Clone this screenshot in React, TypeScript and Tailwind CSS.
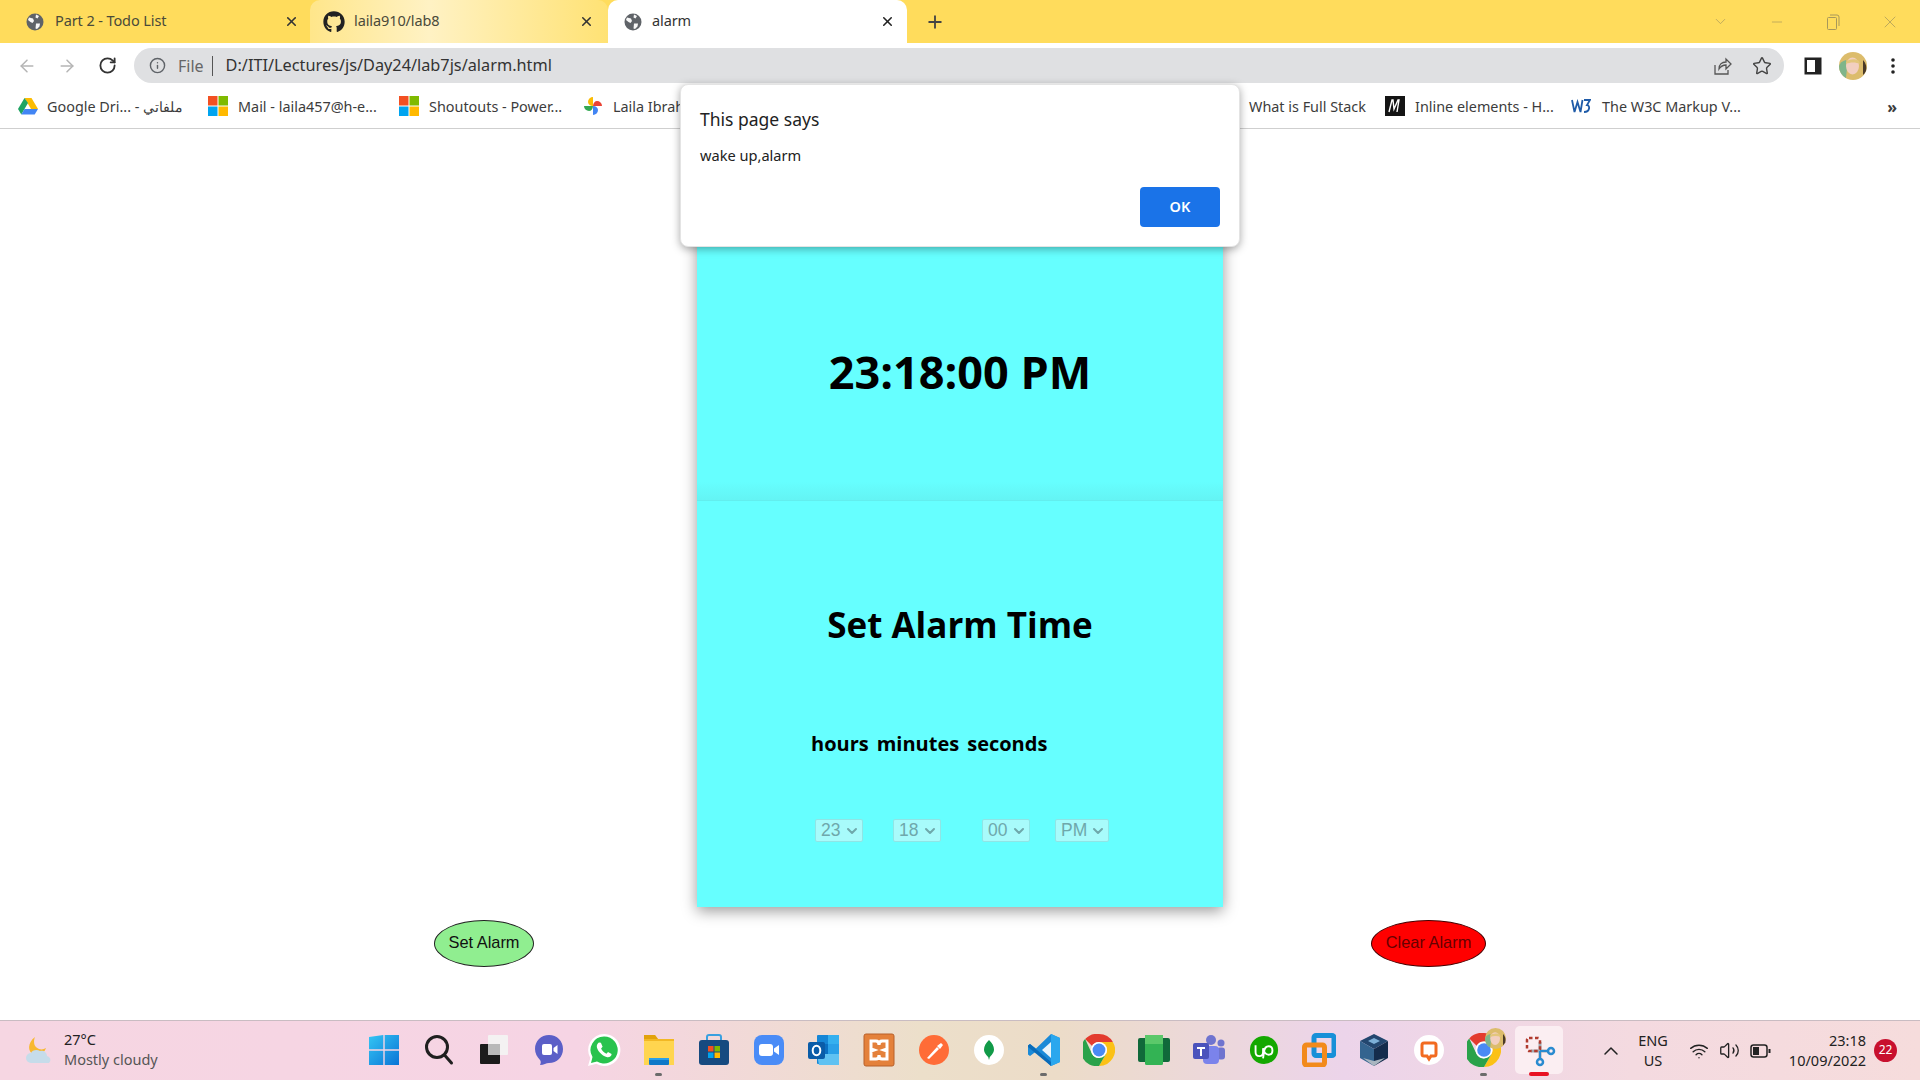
import React from "react";
import { FaGithub } from "react-icons/fa";
import { ArrowLeft, ArrowRight, RotateCw, Info, Star, Plus, X, ChevronDown, Minus, ChevronUp, Wifi, Volume2 } from "lucide-react";

const Globe = () => (
  <svg width="18" height="18" viewBox="0 0 18 18">
    <circle cx="9" cy="9" r="8.5" fill="#5f6368" />
    <path d="M3 4.500 7 5.500 8 8 6.500 10 4.500 9 2 7ZM10 1.500 13 3 11.500 5.500 9.500 4.500ZM10 10.500 14 10.500 13.500 13.500 11 16 9.500 15.500Z" fill="#fff" opacity="0.95" />
  </svg>
);

const Ms = () => (
  <svg width="20" height="20" viewBox="0 0 20 20">
    <rect width="9.500" height="9.500" fill="#f25022" />
    <rect x="10.500" width="9.500" height="9.500" fill="#7fba00" />
    <rect y="10.500" width="9.500" height="9.500" fill="#00a4ef" />
    <rect x="10.500" y="10.500" width="9.500" height="9.500" fill="#ffb900" />
  </svg>
);

const ChromeLogo = ({ size = 30 }: { size?: number }) => (
  <svg width={size} height={size} viewBox="0 0 30 30">
    <path d="M15 0A15 15 0 0 1 28 7.500L15 7.500A7.500 7.500 0 0 0 8.500 11.300L2 4.800A15 15 0 0 1 15 0Z" fill="#e33b2e" />
    <path d="M28 7.500A15 15 0 0 1 15 30L21.500 18.800A7.500 7.500 0 0 0 21.500 11.200L15 7.500Z" fill="#fbc116" />
    <path d="M15 30A15 15 0 0 1 2 4.800L8.500 18.800A7.500 7.500 0 0 0 15 22.500L21.500 18.800Z" fill="#2aa24a" />
    <circle cx="15" cy="15" r="7.500" fill="#fff" />
    <circle cx="15" cy="15" r="6" fill="#4a8af4" />
  </svg>
);

const Face = ({ w, h }: { w: number; h: number }) => (
  <svg width={w} height={h} viewBox="0 0 28 28">
    <circle cx="14" cy="14" r="14" fill="#dcbc6c" />
    <path d="M0 14a14 14 0 0 0 7 12l1-10-1-8C3 9 1 11 0 14Z" fill="#7fb58a" />
    <path d="M24 8c3 3 4 7 3 11-1 2-2 3-3 4Z" fill="#4a3a28" />
    <ellipse cx="13.500" cy="14" rx="6.500" ry="8.500" fill="#f2cfc0" />
    <path d="M7 10c2-3 10-4 13-1l1 3c-4-2-10-2-14 0Z" fill="#e3c67c" />
  </svg>
);

const icons: React.ReactNode[] = [
  <svg key="win" width="32" height="32" viewBox="0 0 32 32"><defs><linearGradient id="w" x1="0" y1="0" x2="1" y2="1"><stop offset="0" stopColor="#35c5f4" /><stop offset="1" stopColor="#0a74d6" /></linearGradient></defs><path d="M1 3 15.300 1v14.300H1ZM16.700 1 31 1v14.300H16.700ZM1 16.700h14.300V31H1ZM16.700 16.700H31V31H16.700Z" fill="url(#w)" /></svg>,
  <svg key="search" width="32" height="32" viewBox="0 0 32 32" fill="none" stroke="#1f1f1f" strokeWidth="3" strokeLinecap="round"><circle cx="14" cy="13" r="10.500" /><path d="m21.500 21 7 8" /></svg>,
  <svg key="tv" width="32" height="32" viewBox="0 0 32 32"><rect x="10" y="1" width="20" height="20" rx="1" fill="#f4f2f2" /><rect x="2" y="10" width="20" height="20" rx="1" fill="#1b1b1b" /><rect x="10" y="10" width="12" height="11" fill="#b9b9b9" /></svg>,
  <svg key="tc" width="32" height="34" viewBox="0 0 32 34"><path d="M16 2c8 0 14 6 14 14s-6 14-14 14c-3 0-5 2-9 2 1-2 1-4 0-5C4 24 2 20 2 16 2 8 8 2 16 2Z" fill="#5b5fc7" /><rect x="9" y="11" width="10" height="11" rx="2" fill="#fff" /><path d="m20.500 15 4-3v9l-4-3Z" fill="#fff" /></svg>,
  <svg key="wa" width="34" height="34" viewBox="0 0 34 34"><path d="M17 1a16 16 0 0 0-13.700 24L1 33l8.300-2.200A16 16 0 1 0 17 1Z" fill="#fff" /><path d="M17 3.500a13.500 13.500 0 0 0-11.500 20.500L4 30l6-1.600A13.500 13.500 0 1 0 17 3.500Z" fill="#29c34e" /><path d="M12 9.500c-1 .4-2.200 2-2.200 4 0 3 4.500 9.500 10.500 10.800 2.500.3 4.300-1.500 4.300-3.300l-3.600-2-1.500 1.700c-2.500-1-4.600-3.200-5.400-5.300l1.500-1.600-1.700-4Z" fill="#fff" /></svg>,
  <svg key="files" width="32" height="32" viewBox="0 0 32 32"><path d="M1 1h11l3 4h16v26H1Z" fill="#ffd54f" /><path d="M1 1h11l3 4H1Z" fill="#e2a20c" /><rect x="1" y="5" width="30" height="2" fill="#f2b824" /><rect x="6" y="24" width="20" height="7" rx="1" fill="#0f78c8" /><rect x="6" y="24" width="20" height="2" fill="#2aa0e8" /></svg>,
  <svg key="store" width="32" height="32" viewBox="0 0 32 32"><path d="M9 7V3a2 2 0 0 1 2-2h10a2 2 0 0 1 2 2v4" fill="none" stroke="#39a0e0" strokeWidth="2" /><rect x="1" y="6" width="30" height="25" rx="3" fill="#164a80" /><rect x="10" y="12" width="5.500" height="5.500" fill="#f25022" /><rect x="16.500" y="12" width="5.500" height="5.500" fill="#7fba00" /><rect x="10" y="18.500" width="5.500" height="5.500" fill="#00a4ef" /><rect x="16.500" y="18.500" width="5.500" height="5.500" fill="#ffb900" /></svg>,
  <svg key="zoom" width="32" height="32" viewBox="0 0 32 32"><rect x="1" y="1" width="30" height="30" rx="8" fill="#4a8cf7" /><rect x="6" y="10" width="14" height="12" rx="3" fill="#fff" /><path d="m21 14.500 5-3.500v10l-5-3.500Z" fill="#fff" /></svg>,
  <svg key="out" width="34" height="34" viewBox="0 0 34 34"><rect x="10" y="2" width="22" height="29" rx="1" fill="#1586d6" /><rect x="21" y="2" width="11" height="9" fill="#35b0ef" /><rect x="10" y="11" width="11" height="10" fill="#0a6fc2" /><rect x="21" y="11" width="11" height="10" fill="#2aa0e8" /><path d="M10 21h22v11H12Z" fill="#60c2f2" /><rect x="1" y="9" width="17" height="17" rx="2" fill="#0a5ca8" /><ellipse cx="9.500" cy="17.500" rx="3.800" ry="4.800" fill="none" stroke="#fff" strokeWidth="2" /></svg>,
  <svg key="xa" width="32" height="34" viewBox="0 0 32 34"><rect x="1" y="1" width="30" height="32" rx="2" fill="#e4813b" stroke="#b8602a" /><path d="M8 8h5c2 0 3 2 3 4 0-2 1-4 3-4h5v8l-3 1 3 1v8h-5c-2 0-3-2-3-4 0 2-1 4-3 4H8v-8l3-1-3-1Z" fill="none" stroke="#fff" strokeWidth="3" /></svg>,
  <svg key="pm" width="32" height="32" viewBox="0 0 32 32"><circle cx="16" cy="16" r="15" fill="#ff6c37" /><path d="M9 24 19 13l2 2-10 10ZM19 12l4-3 2 2-3 4Z" fill="#fff" /></svg>,
  <svg key="mg" width="32" height="32" viewBox="0 0 32 32"><circle cx="16" cy="16" r="15" fill="#fff" /><path d="M16 6c3 3 5 6 5 9.500 0 3.500-3 6-4.200 7.500L16 26l-.8-3C14 21.500 11 19 11 15.500 11 12 13 9 16 6Z" fill="#119a48" /></svg>,
  <svg key="vs" width="34" height="34" viewBox="0 0 34 34"><path d="M24 1 33 5v24l-9 4L9 18.500 3 23 1 21.500V12.500L3 11l6 4.500Z" fill="#1a8ad8" /><path d="M24 1 33 5v24l-9 4Z" fill="#2aa7ee" /><path d="M24 9v16l-9-8Z" fill="#fff" opacity="0.9" /><path d="M1 12.500 3 11l21 18v4L1 14Z" fill="#0a6bb8" /></svg>,
  <ChromeLogo key="cr" size={32} />,
  <svg key="gr" width="34" height="34" viewBox="0 0 34 34"><rect x="1" y="5" width="32" height="24" rx="2" fill="#10693a" /><rect x="8" y="2" width="18" height="30" rx="1.500" fill="#33b354" /><rect x="8" y="2" width="18" height="9" fill="#5bc86a" /></svg>,
  <svg key="te" width="34" height="34" viewBox="0 0 34 34"><circle cx="19" cy="7" r="5" fill="#6f74cf" /><circle cx="29" cy="10" r="3.500" fill="#6f74cf" /><rect x="25" y="14.500" width="8" height="12" rx="3" fill="#6f74cf" /><rect x="11" y="13" width="16" height="18" rx="4" fill="#7b83eb" /><rect x="1" y="10" width="16" height="16" rx="2" fill="#4b53bc" /><path d="M5 14h8v2h-3v7H8v-7H5Z" fill="#fff" /></svg>,
  <svg key="up" width="30" height="30" viewBox="0 0 32 32"><circle cx="16" cy="16" r="15" fill="#14a800" /><path d="M7 11v7c0 3 2 4.500 4 4.500s4-1.500 4-4.500v-4c1 4 3 7 6 7 3 0 4-2 4-4.500S23.500 12 21 12s-4.500 2-5 6l-1 7" fill="none" stroke="#fff" strokeWidth="2" /></svg>,
  <svg key="vm" width="34" height="34" viewBox="0 0 34 34" fill="none"><rect x="12" y="2.500" width="20" height="20" rx="2" stroke="#1790d8" strokeWidth="5" /><rect x="2.500" y="12" width="20" height="20" rx="2" stroke="#f28a1b" strokeWidth="5" /></svg>,
  <svg key="vb" width="32" height="34" viewBox="0 0 32 34"><path d="M16 1 30 8 16 16 2 8Z" fill="#23476f" /><path d="M2 8 16 16v17L2 25Z" fill="#34648f" /><path d="M30 8 16 16v17l14-8Z" fill="#142c4c" /><path d="M16 5l6 3-6 3-6-3Z" fill="#7db0d8" /><path d="M5 25l11 8 11-8-11 3Z" fill="#a9b6c0" /></svg>,
  <svg key="ch" width="32" height="32" viewBox="0 0 32 32"><circle cx="16" cy="16" r="15" fill="#fff" /><path d="M11 9h10a2 2 0 0 1 2 2v9a2 2 0 0 1-2 2h-3l-2 3-2-3h-3a2 2 0 0 1-2-2v-9a2 2 0 0 1 2-2Z" fill="none" stroke="#f26b21" strokeWidth="3" /></svg>,
  <div key="cr2" className="relative w-[34px] h-[34px]"><ChromeLogo size={34} /><div className="absolute right-[-5px] top-[-6px]"><Face w={21} h={23} /></div></div>,
  <svg key="sn" width="36" height="36" viewBox="0 0 36 36" fill="none"><path d="M19 10v17M10 19h17" stroke="#a3a8b0" strokeWidth="3" /><rect x="6" y="6" width="13" height="13" rx="2" stroke="#b03a2e" strokeWidth="2.500" strokeDasharray="3.500 2.500" /><path d="M19 19 27.500 19" stroke="#2a8bd0" strokeWidth="2" /><path d="M19 19 19 27.500" stroke="#2a8bd0" strokeWidth="2" /><circle cx="30" cy="19" r="3" stroke="#2a8bd0" strokeWidth="2.500" /><circle cx="19" cy="30" r="3" stroke="#2a8bd0" strokeWidth="2.500" /></svg>,
];

const marks: Record<number, boolean> = { 5: true, 12: true, 20: true };

export default function App() {
  return (
    <div className="relative w-[1920px] h-[1080px] overflow-hidden bg-white flex flex-col font-['Noto_Sans','Open_Sans',sans-serif] text-[#222]">
      {/* Tab strip */}
      <div className="h-[43px] shrink-0 bg-[#ffdc5c] flex items-stretch text-[14.5px] text-[#4a4a3a]">
        <div className="w-[310px] shrink-0 flex items-center pl-[26px]">
          <Globe />
          <span className="ml-[11px] pb-[1px] w-[229px] truncate tracking-[-0.1px]">Part 2 - Todo List</span>
          <X size={15} strokeWidth={2.5} className="text-[#333]" />
        </div>
        <div className="w-[298px] shrink-0 flex items-center pl-[13px] rounded-t-[10px] bg-[linear-gradient(90deg,#ffe68a_0%,#fff2c4_40%,#ffe274_100%)]">
          <FaGithub size={22} className="text-[#222]" />
          <span className="ml-[9px] pb-[1px] w-[225px] truncate tracking-[-0.1px]">laila910/lab8</span>
          <X size={15} strokeWidth={2.5} className="text-[#333]" />
        </div>
        <div className="w-[299px] shrink-0 flex items-center pl-[16px] rounded-t-[10px] bg-white text-[#333]">
          <Globe />
          <span className="ml-[10px] pb-[1px] w-[228px] truncate tracking-[-0.1px]">alarm</span>
          <X size={15} strokeWidth={2.5} className="text-[#222]" />
        </div>
        <div className="flex items-center ml-[18px]"><Plus size={20} strokeWidth={2.2} className="text-[#444]" /></div>
        <div className="ml-auto flex items-center pr-[20px] text-[#a8985a]">
          <ChevronDown size={17} strokeWidth={1} />
          <Minus size={16} strokeWidth={1} className="ml-[40px]" />
          <svg width="14" height="16" viewBox="0 0 14 16" fill="none" stroke="currentColor" className="ml-[41px]"><rect x="1.500" y="3.500" width="9" height="12" rx="1" /><path d="M4 1h7a2 2 0 0 1 2 2v9" /></svg>
          <X size={20} strokeWidth={0.9} className="ml-[40px]" />
        </div>
      </div>
      {/* Toolbar */}
      <div className="h-[45px] shrink-0 bg-white flex items-center">
        <ArrowLeft size={20} strokeWidth={1.8} className="ml-[17px] text-[#b5b5b5]" />
        <ArrowRight size={20} strokeWidth={1.8} className="ml-[20px] text-[#b5b5b5]" />
        <RotateCw size={19} strokeWidth={2.3} className="ml-[21px] text-[#333]" />
        <div className="ml-[17px] w-[1650px] h-[35px] rounded-full bg-[#dfe0e2] flex items-center text-[16px]">
          <Info size={17} strokeWidth={2} className="ml-[15px] text-[#5f6368]" />
          <span className="ml-[12px] text-[#666]">File</span>
          <span className="ml-[8px] w-px h-[20px] bg-[#555]" />
          <span className="ml-[13px] text-[#333] text-[16.3px]">D:/ITI/Lectures/js/Day24/lab7js/alarm.html</span>
          <svg width="20" height="20" viewBox="0 0 20 20" fill="none" stroke="#555" strokeWidth="1.300" className="ml-auto"><path d="M3 9v9h13v-4M7 13c0-5 3-7 7-7V3l5 5-5 5V9c-3 0-5 1-7 4Z" /></svg>
          <Star size={20} strokeWidth={1.7} className="ml-[20px] mr-[12px] text-[#444]" />
        </div>
        <svg width="18" height="18" viewBox="0 0 18 18" className="ml-[20px]"><rect x="0.500" y="0.500" width="17" height="17" fill="#222" /><rect x="3" y="3" width="8" height="12" fill="#fff" /></svg>
        <div className="ml-[17px]"><Face w={28} h={28} /></div>
        <svg width="4" height="16" viewBox="0 0 4 16" className="ml-[24px]"><circle cx="2" cy="2" r="1.800" fill="#222" /><circle cx="2" cy="8" r="1.800" fill="#222" /><circle cx="2" cy="14" r="1.800" fill="#222" /></svg>
      </div>
      {/* Bookmarks */}
      <div className="h-[41px] shrink-0 bg-white border-b border-[#cfcfcf] pb-[3px] flex items-center text-[14.4px] text-[#3c3c3c]">
        <div className="ml-[18px] w-[190px] flex items-center gap-[9px]">
          <svg width="20" height="18" viewBox="0 0 20 18"><path d="M6.500 1h7L20 12h-7Z" fill="#fbbc04" /><path d="M6.500 1 0 12l3.300 5.500L10 6Z" fill="#1fa463" /><path d="M3.300 17.500h13.400L20 12H6.500Z" fill="#4285f4" /></svg>
          <span className="truncate">Google Dri... - ملفاتي</span>
        </div>
        <div className="w-[191px] flex items-center gap-[10px]"><Ms /><span>Mail - laila457@h-e...</span></div>
        <div className="w-[184px] flex items-center gap-[10px]"><Ms /><span>Shoutouts - Power...</span></div>
        <div className="w-[646px] flex items-center gap-[10px]">
          <svg width="20" height="20" viewBox="0 0 20 20"><path d="M10 10V1a5 5 0 0 0-5 5c0 2 2 4 5 4Z" fill="#fbbc04" /><path d="M10 10h9a5 5 0 0 0-5-5c-2 0-4 2-4 5Z" fill="#ea4335" /><path d="M10 10v9a5 5 0 0 0 5-5c0-2-2-4-5-4Z" fill="#4285f4" /><path d="M10 10H1a5 5 0 0 0 5 5c2 0 4-2 4-5Z" fill="#34a853" /></svg>
          <span>Laila Ibrahim</span>
        </div>
        <div className="w-[156px] pl-[20px]">What is Full Stack</div>
        <div className="w-[186px] flex items-center gap-[10px]">
          <svg width="20" height="20" viewBox="0 0 20 20"><rect width="20" height="20" fill="#141414" /><path d="M4 16 7 4h1l1 9 4-9h1l-2 12" fill="none" stroke="#fff" strokeWidth="1.400" /></svg>
          <span>Inline elements - H...</span>
        </div>
        <div className="flex items-center gap-[11px]">
          <svg width="20" height="14" viewBox="0 0 20 14" fill="none" stroke="#1f5ba8" strokeWidth="1.800"><path d="M1 1l2.500 12L6.500 3l3 10 2-12M13 1h6l-3 5c3 0 3.500 7-3 7" /></svg>
          <span>The W3C Markup V...</span>
        </div>
        <span className="ml-auto mr-[23px] text-[16px] font-bold">»</span>
      </div>
      {/* Page */}
      <div className="flex-1 min-h-0 flex flex-col items-center">
        <div className="mt-[60px] w-[526px] bg-[#66ffff] shadow-[0_4px_14px_rgba(0,0,0,0.4)] text-black font-bold font-['Open_Sans','Noto_Sans',sans-serif]">
          <div className="h-[312px] pt-[54px] flex items-center justify-center border-b border-[#62eeee] bg-[linear-gradient(180deg,#66ffff_0%,#66ffff_94%,#64f4f4_100%)]">
            <h1 className="text-[45px] leading-none">23:18:00 PM</h1>
          </div>
          <div className="h-[406px] pt-[99px]">
            <h2 className="text-[35px] leading-[50px] text-center">Set Alarm Time</h2>
            <div className="mt-[80px] pl-[114px] text-[20px] leading-[28px] flex gap-[8px]"><span>hours</span><span>minutes</span><span>seconds</span></div>
            <div className="mt-[61px] pl-[118px] flex font-normal font-['Liberation_Sans',sans-serif] text-[17.5px] leading-none text-[#6fa8ab]">
              <div className="w-[48px] h-[23px] rounded-[2px] bg-[#a8fbfb] border border-[#8fe5e5] flex items-center justify-between pl-[5px] pr-[2px]">23<ChevronDown size={16} strokeWidth={3} /></div>
              <div className="ml-[30px] w-[48px] h-[23px] rounded-[2px] bg-[#a8fbfb] border border-[#8fe5e5] flex items-center justify-between pl-[5px] pr-[2px]">18<ChevronDown size={16} strokeWidth={3} /></div>
              <div className="ml-[41px] w-[48px] h-[23px] rounded-[2px] bg-[#a8fbfb] border border-[#8fe5e5] flex items-center justify-between pl-[5px] pr-[2px]">00<ChevronDown size={16} strokeWidth={3} /></div>
              <div className="ml-[25px] w-[54px] h-[23px] rounded-[2px] bg-[#a8fbfb] border border-[#8fe5e5] flex items-center justify-between pl-[5px] pr-[2px]">PM<ChevronDown size={16} strokeWidth={3} /></div>
            </div>
          </div>
        </div>
        <div className="mt-[13px] w-full pl-[434px] pr-[434px] flex justify-between font-['Liberation_Sans',sans-serif] text-[16.4px]">
          <button className="w-[100px] h-[47px] pb-[2px] rounded-[50%] bg-[#90ee90] border border-[#222] text-[#111]">Set Alarm</button>
          <button className="w-[115px] h-[47px] pb-[2px] rounded-[50%] bg-[#ff0000] border border-[#400] text-[#600]">Clear Alarm</button>
        </div>
      </div>
      {/* Taskbar */}
      <div className="h-[60px] shrink-0 border-t border-[#c9bcc2] bg-[linear-gradient(90deg,#f6d6e2_0%,#f6d4e4_30%,#ecdfca_48%,#ecdcc8_55%,#ecd4ea_70%,#f4dae0_85%,#f6dcdc_100%)] flex items-center">
        <div className="w-[356px] shrink-0 flex items-center pl-[24px]">
          <svg width="30" height="30" viewBox="0 0 30 30"><path d="M11 1c-2 5-1 10 4 12 3 1 5 0 7-1-2 6-8 8-13 6C4 16 3 7 11 1Z" fill="#f8b830" /><path d="M7 27a5 5 0 0 1 0-10c1-3 6-4 9-2 3-1 7 1 7 5a4 4 0 0 1 2 7Z" fill="#c6dcea" /></svg>
          <div className="ml-[10px] pb-[4px] text-[14.5px] leading-[20px]"><div className="text-[#222]">27°C</div><div className="text-[#555]">Mostly cloudy</div></div>
        </div>
        <div className="flex h-full -translate-y-px">
          {icons.map((ic, i) => (
            <div key={i} className="relative w-[55px] h-full flex items-center justify-center">
              {i === 21 && <div className="absolute left-[4px] right-[3px] top-[6px] bottom-[5px] rounded-[5px] bg-[#fbeef2]" />}
              <div className="relative">{ic}</div>
              {marks[i] && <div className="absolute bottom-[3px] left-[24px] w-[7px] h-[3px] rounded-full bg-[#6b6b6b]" />}
              {i === 21 && <div className="absolute bottom-[3px] left-[18px] w-[20px] h-[4px] rounded-full bg-[#e81123]" />}
            </div>
          ))}
        </div>
        <ChevronUp size={24} strokeWidth={1.5} className="ml-[33px] text-[#222]" />
        <div className="ml-[10px] pb-[2px] w-[40px] text-center text-[14.5px] leading-[20px] text-[#222]"><div>ENG</div><div>US</div></div>
        <Wifi size={20} className="ml-[16px] text-[#222]" strokeWidth={1.7} />
        <Volume2 size={21} className="ml-[10px] text-[#222]" strokeWidth={1.5} />
        <svg width="21" height="14" viewBox="0 0 21 14" className="ml-[10px]"><rect x="1" y="1" width="16" height="12" rx="2.500" fill="none" stroke="#222" strokeWidth="1.500" /><rect x="3" y="3" width="6" height="8" fill="#222" /><rect x="18.500" y="5" width="2" height="4" fill="#222" /></svg>
        <div className="ml-[17px] pb-[2px] w-[78px] text-right text-[14.5px] leading-[20px] text-[#222]"><div>23:18</div><div>10/09/2022</div></div>
        <div className="ml-[8px] mb-[1px] w-[23px] h-[23px] rounded-full bg-[#c8102e] text-white text-[12px] flex items-center justify-center">22</div>
      </div>
      {/* Alert dialog */}
      <div className="absolute left-[680px] top-[84px] w-[560px] h-[163px] rounded-[8px] bg-white border border-[#e4e4e4] shadow-[0_2px_8px_rgba(0,0,0,0.35)]">
        <div className="pl-[19px] pt-[22px] text-[17.5px] leading-[24px] text-[#222]">This page says</div>
        <div className="pl-[19px] pt-[13px] text-[14.6px] leading-[22px] text-[#222]">wake up,alarm</div>
        <button className="absolute right-[19px] bottom-[19px] w-[80px] h-[40px] rounded-[4px] bg-[#1a73e8] text-white text-[14.5px] font-semibold">OK</button>
      </div>
    </div>
  );
}
